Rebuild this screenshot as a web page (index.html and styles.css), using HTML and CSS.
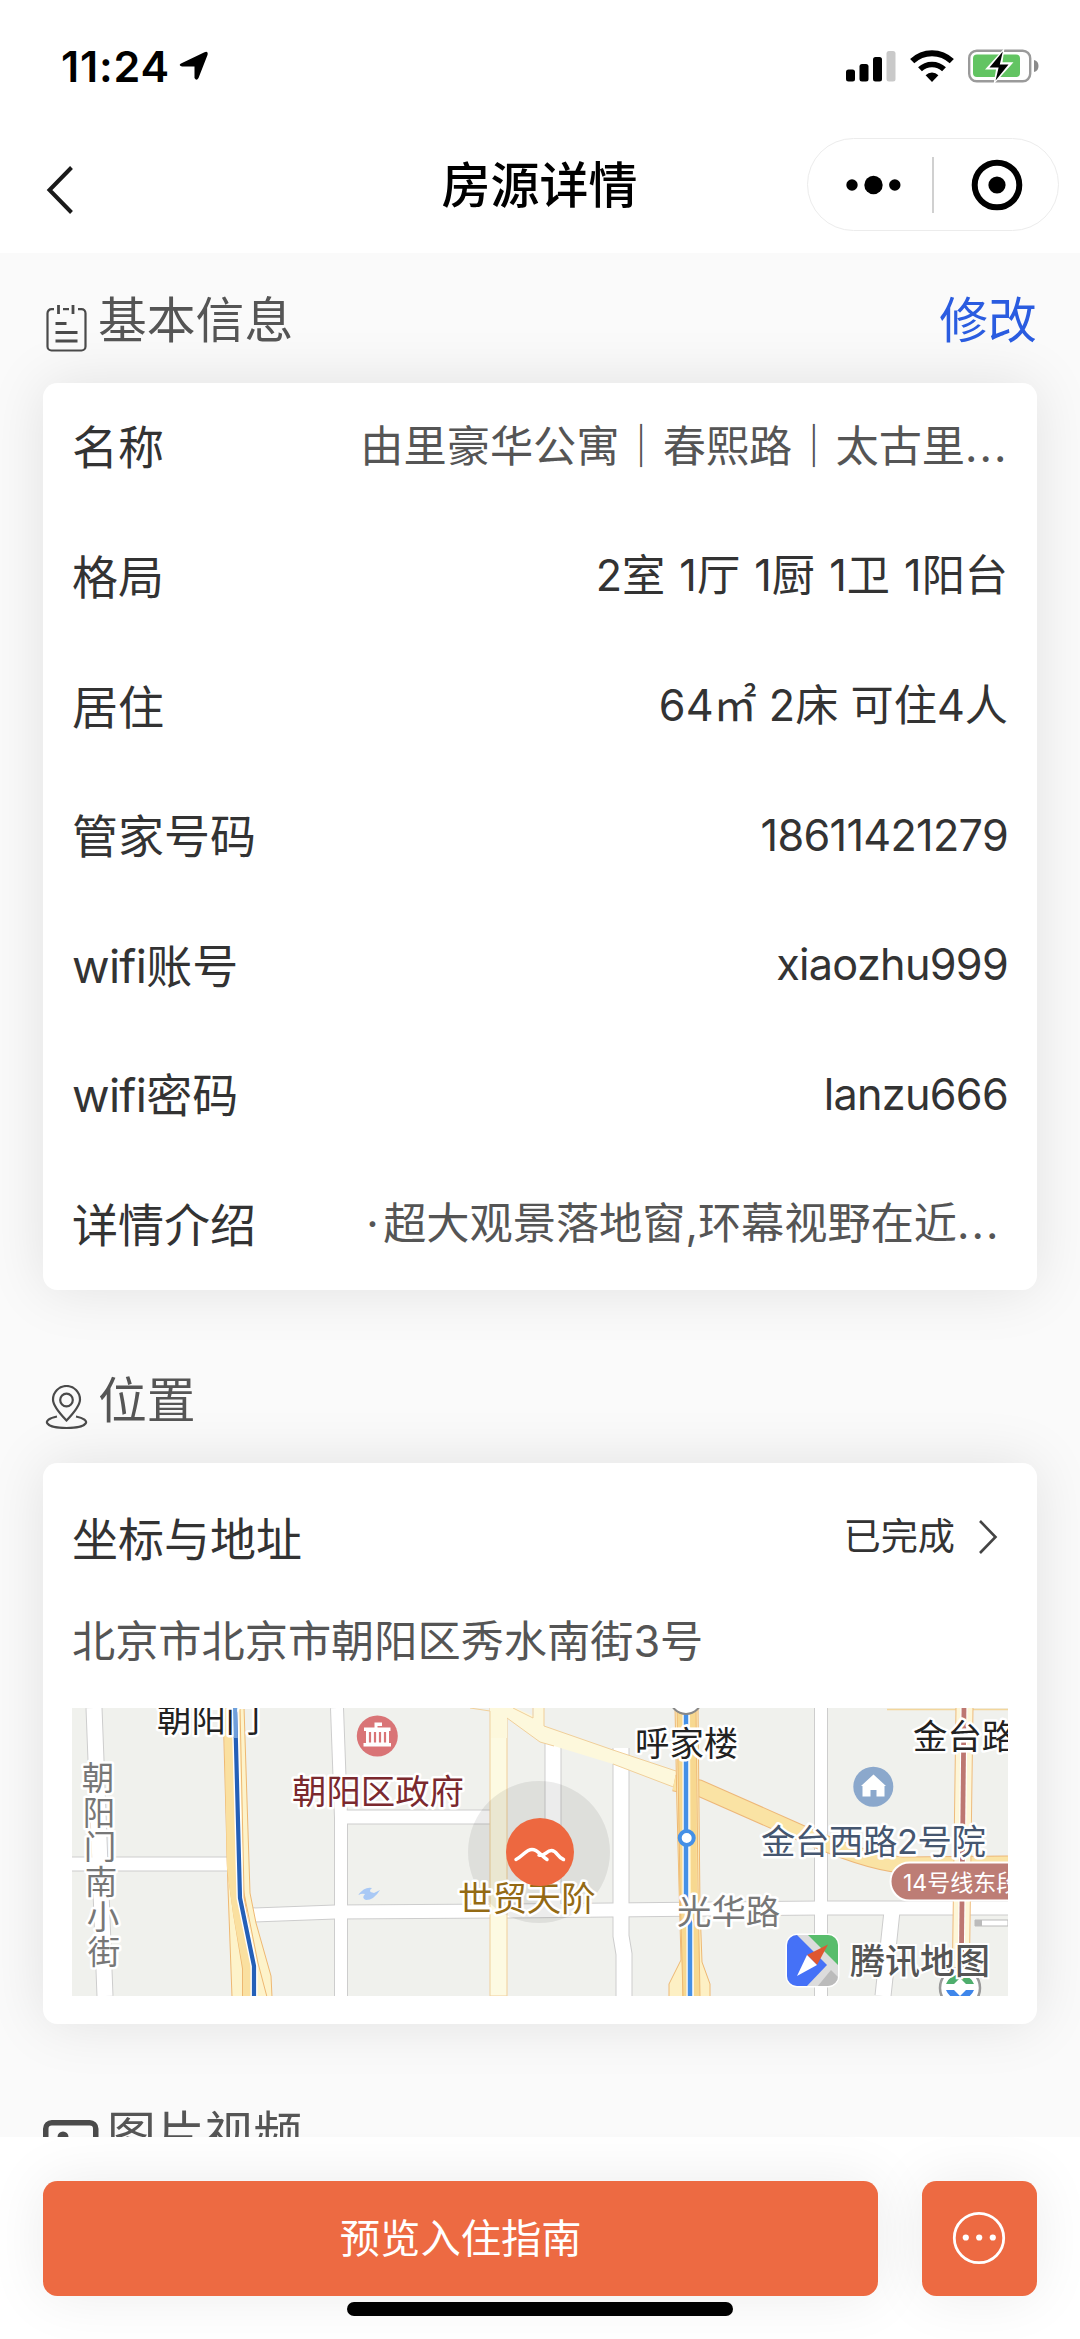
FILE: index.html
```html
<!DOCTYPE html>
<html lang="zh-CN">
<head>
<meta charset="utf-8">
<title>房源详情</title>
<link rel="stylesheet" href="styles.css">
</head>
<body>
<div class="app">
  <header class="top">
    <div class="status">
      <div class="clock">
        <span class="time">11:24</span>
        <svg class="loc" width="30" height="30" viewBox="0 0 30 30"><path d="M2 12.500 25.500 1.200q4-1.500 3 2.800L19.500 27q-2 3.500-4 0V15.600H3Q-1 14.300 2 12.500Z"/></svg>
      </div>
      <div class="indicators">
        <svg width="50" height="32" viewBox="0 0 50 32"><rect x="0" y="19.500" width="9" height="12" rx="2.500"/><rect x="13.500" y="14" width="9" height="17.500" rx="2.500"/><rect x="27" y="7" width="9" height="24.500" rx="2.500"/><rect x="40.500" y="1" width="9" height="30.500" rx="2.500" fill="#c9c9c9"/></svg>
        <svg width="44" height="32" viewBox="0 0 44 32"><path d="M2.200 11.200a28.500 28.500 0 0 1 39.600 0" fill="none" stroke="#000" stroke-width="6"/><path d="M10 19.300a17.300 17.300 0 0 1 24 0" fill="none" stroke="#000" stroke-width="5.500"/><path d="M22 32 15.600 25.200a9.200 9.200 0 0 1 12.800 0Z"/></svg>
        <svg width="72" height="34" viewBox="0 0 72 34"><rect x="1.200" y="1.700" width="61" height="30.600" rx="7.500" fill="#fff" stroke="#9a9a9a" stroke-width="2.400"/><rect x="5" y="5.500" width="47" height="22.500" rx="4" fill="#62c462"/><path d="M66 11q4.500 1.200 4.500 6T66 23Z" fill="#8a8a8a"/><path d="M36.500-1 17 20.500h11L25.500 35.500 45.500 13.200H34.500Z" fill="#fff"/><path d="M34.800 2.500 21.500 18.600h9.100L27.600 31.500 40.500 15.500H31.800Z"/></svg>
      </div>
    </div>
    <nav class="nav">
      <svg class="back" width="28" height="50" viewBox="0 0 28 50"><path d="M25.500 2.500 3.500 25 25.500 47.500" fill="none" stroke="#1a1a1a" stroke-width="4"/></svg>
      <h1>房源详情</h1>
      <div class="capsule">
        <svg width="56" height="20" viewBox="0 0 56 20"><circle cx="6" cy="10" r="5.700"/><circle cx="27.500" cy="10" r="9.200"/><circle cx="48.800" cy="10" r="5.700"/></svg>
        <i></i>
        <svg width="52" height="52" viewBox="0 0 52 52"><circle cx="26" cy="26" r="22.300" fill="none" stroke="#000" stroke-width="6"/><circle cx="26" cy="26" r="8.600"/></svg>
      </div>
    </nav>
  </header>

  <main>
    <div class="head">
      <svg class="note" width="41" height="48" viewBox="0 0 41 48" fill="none" stroke="#4a4a4a" stroke-width="2.200"><path d="M8 5.200H5.500A4 4 0 0 0 1.500 9.200V42.500A4 4 0 0 0 5.500 46.500H35.500A4 4 0 0 0 39.500 42.500V9.200A4 4 0 0 0 35.500 5.200H32M17 5.200h6"/><path d="M12.500 1v9M27 1v9M9.500 19.500h11M9.500 28.500h22M9.500 37h22" stroke-width="2.800"/></svg>
      <h2>基本信息</h2>
      <a class="edit">修改</a>
    </div>
    <section class="card">
      <div class="row"><b>名称</b><span class="soft">由里豪华公寓<strong>｜</strong>春熙路<strong>｜</strong>太古里<em>...</em></span></div>
      <div class="row"><b>格局</b><span class="rooms">2室 1厅 1厨 1卫 1阳台</span></div>
      <div class="row"><b>居住</b><span>64㎡ 2床 可住4人</span></div>
      <div class="row"><b>管家号码</b><span class="latin">18611421279</span></div>
      <div class="row"><b><u>wifi</u>账号</b><span class="latin">xiaozhu999</span></div>
      <div class="row"><b><u>wifi</u>密码</b><span class="latin">lanzu666</span></div>
      <div class="row"><b>详情介绍</b><span class="soft intro"><i>·</i>超大观景落地窗,环幕视野在近<em>...</em></span></div>
    </section>

    <div class="head">
      <svg class="pin" width="43" height="44" viewBox="0 0 43 44" fill="none" stroke="#4a4a4a" stroke-width="2.200"><path d="M21.500 35.500Q8 21.500 8 14.500a13.500 13.500 0 0 1 27 0Q35 21.500 21.500 35.500Z"/><circle cx="21.500" cy="15" r="6.300"/><path d="M12 31.500C-4 34.500-1 43 21.500 43s25.500-8.500 9.500-11.500"/></svg>
      <h2>位置</h2>
    </div>
    <section class="card place">
      <div class="place-top"><b>坐标与地址</b><span>已完成</span><svg width="22" height="36" viewBox="0 0 22 36"><path d="M3 2 18.500 18 3 34" fill="none" stroke="#444" stroke-width="2.600"/></svg></div>
      <p class="addr">北京市北京市朝阳区秀水南街3号</p>
      <svg class="map" width="936" height="288" viewBox="0 0 936 288">
        <rect width="936" height="288" fill="#f0f1ed"/>
        <!-- side streets: grey casing, then white surface -->
        <g id="streets" fill="none">
          <g stroke="#cdcdcd">
            <path stroke-width="17" d="M22 0 33 288M481 34V202M549 40V228L552 246V288M820 203 811 288"/>
            <path stroke-width="14" d="M265 0 269 110V288M749 0V288"/>
            <path stroke-width="15" d="M0 156H160M269 109H420M180 207 263 204 430 203 750 200H936"/>
          </g>
          <g stroke="#fff">
            <path stroke-width="15" d="M22 0 33 288M481 34V202M549 40V228L552 246V288M820 203 811 288"/>
            <path stroke-width="12" d="M265 0 269 110V288M749 0V288"/>
            <path stroke-width="13" d="M0 156H160M269 109H420M180 207 263 204 430 203 750 200H936"/>
          </g>
        </g>
        <path d="M903 212h33v6h-33z" fill="#fff" stroke="#bbb"/><path d="M903 212h7v6h-7z" fill="#bbb"/>
        <!-- main roads -->
        <path d="M418-1H435V288H418Z" fill="#fdfae2" stroke="#f0cf9a"/>
        <path d="M398-1 418 3V-1H441L462 8V-1H472V18L541 42 604 63V80L541 56 482 38 468 34 435 10V30H419V3Z" fill="#fdf8dc"/>
        <path d="M398 0 418 3M435 10 468 34 482 38M541 56 604 80M441 0 461 10V0M472 0V18L541 42 604 63" fill="none" stroke="#f0cf9a"/>
        <path d="M602 75 627 80 720 121Q792 154 830 157L936 156" fill="none" stroke="#edb779" stroke-width="17"/>
        <path d="M602 75 627 80 720 121Q792 154 830 157L936 156" fill="none" stroke="#fae3a4" stroke-width="15"/>
        <path d="M151-1H172L178 185 184 215 199 268 200 289H160L156 180Z" fill="#fdf3ca" stroke="#eeb872"/>
        <path d="M159-1 162 160 168 205 177 260V289" fill="none" stroke="#eeb872" stroke-width="14"/>
        <path d="M158-1 161 160 167 205 177 260V289" fill="none" stroke="#fae0a0" stroke-width="12"/>
        <path d="M168-1 172 185 186 255 195 289" fill="none" stroke="#eeb872"/>
        <path d="M603-1H626L628 200 630 254 638 276V289H597V276L609 252 605 100Z" fill="#fdf0c4" stroke="#eeb872"/>
        <path d="M608-1 610 180 613 260V289M621-1 622 180 625 260V289" fill="none" stroke="#f7d890" stroke-width="6"/>
        <path d="M605-1 608 180 611 289M624-1 626 180 628 289" fill="none" stroke="#eeb872"/>
        <path d="M815 1.500H936" stroke="#f3d69c" stroke-width="1.500"/>
        <path d="M884-1H901L897 289H880Z" fill="#fdf6d8" stroke="#eebb7c"/>
        <!-- metro lines -->
        <path d="M163-1 168 190 182 258V289" fill="none" stroke="#fff" stroke-width="7"/>
        <path d="M163-1 168 190 182 258V289" fill="none" stroke="#2460b8" stroke-width="4.200"/>
        <path d="M614 0V190L618 215V289" fill="none" stroke="#fff" stroke-width="7"/>
        <path d="M614 0V190L618 215V289" fill="none" stroke="#4590e6" stroke-width="4.500"/>
        <path d="M892-1 889 289" stroke="#fff" stroke-width="7"/><path d="M892-1 889 289" stroke="#bd7771" stroke-width="4.800"/>
        <circle cx="614.700" cy="130" r="7" fill="#fff" stroke="#4590e6" stroke-width="4"/>
        <circle cx="614" cy="-10" r="16" fill="#fff" stroke="#888" stroke-width="2"/>
        <circle cx="888" cy="280" r="20" fill="#fff" stroke="#999" stroke-width="2.500"/>
        <path d="M874 276a15 15 0 0 1 28 0h-8l-6-6-6 6Z" fill="#4fae6d"/><path d="M874 282h8l6 6 6-6h8a15 15 0 0 1-28 0Z" fill="#3f86ea"/>
        <!-- places -->
        <path d="M286 187q7-9 14-7-5 4 2 5l6-3q-6 10-14 10-5-2-1-6-3-1-7 1Z" fill="#a9c9f5"/>
        <circle cx="305.300" cy="28" r="20.500" fill="#d97476"/>
        <path d="M292 23V19.500H302.500V14.500H310V18H305.500V19.500H318.500V23H317V35H319V38.500H291.500V35H294V23Z" fill="#fff"/><path d="M298 24V34.500M303 24V34.500M308 24V34.500M313 24V34.500" stroke="#d97476" stroke-width="2.200"/>
        <circle cx="801.300" cy="78.700" r="20" fill="#8ba8cc"/>
        <path d="M789 78 801.500 66.500 814 78H812.500V88.500H804.500V82H798.500V88.500H790.500V78Z" fill="#fff"/>
        <circle cx="467" cy="144" r="71" fill="#000" fill-opacity=".075"/>
        <g class="names">
          <text x="85" y="24" fill="#222">朝阳门</text>
          <text x="220" y="96" fill="#7b292e">朝阳区政府</text>
          <text x="386" y="203" fill="#946a14">世贸天阶</text>
          <text x="563" y="48" fill="#222">呼家楼</text>
          <text x="841" y="41" fill="#222">金台路</text>
          <text x="689" y="146" fill="#45566f" textLength="225">金台西路2号院</text>
          <text x="605" y="216" fill="#777">光华路</text>
        </g>
        <path d="M163-1 163.800 30" stroke="#6f9fdb" stroke-width="4"/>
        <g class="names street" fill="#777"><text x="26" y="82">朝</text><text x="27" y="117">阳</text><text x="28" y="151">门</text><text x="29" y="186">南</text><text x="31" y="221">小</text><text x="32" y="256">街</text></g>
        <rect x="818.500" y="154.500" width="150" height="38" rx="19" fill="#bd7d75" stroke="#fff" stroke-width="2"/>
        <text class="line" x="831" y="183">14号线东段</text>
        <circle cx="468" cy="144" r="34" fill="#ed6840"/>
        <path d="M444 151.500C451 148 454 141.500 460 141.500S468 147 475 151.500M467 147C473 149 474 142.500 479.500 142.500S485 149 491.500 151.500" fill="none" stroke="#fff" stroke-width="3.500" stroke-linecap="round"/>
        <!-- map provider mark -->
        <g transform="translate(715 227)"><rect x="-1.500" y="-1.500" width="54" height="54" rx="12" fill="#fff"/><clipPath id="mark"><rect width="51" height="51" rx="10"/></clipPath><g clip-path="url(#mark)"><rect width="51" height="51" fill="#dcdcdc"/><path d="M-1-1H9L40 30 19 52H-1Z" fill="#4571f7"/><path d="M20-1H52V31Z" fill="#58bd6c"/><path d="M30 52 44 35 52 43V52Z" fill="#bbb"/></g><path d="M41 9.500 20 20 30 30Z" fill="#df5730"/><path d="M20 20 10 41 30 30Z" fill="#fff"/></g>
        <text class="brand" x="778" y="266">腾讯地图</text>
      </svg>
    </section>

    <div class="head">
      <svg class="pic" width="56" height="48" viewBox="0 0 56 48" fill="none" stroke="#4a4a4a" stroke-width="5.500"><rect x="2.750" y="2.750" width="50" height="42" rx="6"/><circle cx="20" cy="17" r="5.500" fill="#4a4a4a" stroke="none"/><path d="M8 39 22 28 30 34 42 22 50 30" stroke-width="4"/></svg>
      <h2>图片视频</h2>
    </div>
  </main>

  <footer class="bar">
    <div class="guide">预览入住指南</div>
    <div class="more"><svg width="54" height="54" viewBox="0 0 54 54" fill="#fff"><circle cx="27" cy="27" r="24.700" fill="none" stroke="#fff" stroke-width="2.800"/><circle cx="13.800" cy="26.500" r="3.100"/><circle cx="27.200" cy="26.500" r="3.100"/><circle cx="40.800" cy="26.500" r="3.100"/></svg></div>
    <div class="home"></div>
  </footer>
</div>
</body>
</html>
```
FILE: styles.css
```css
* { box-sizing: border-box; }
body {
  margin: 0;
  font-family: Inter, "Noto Sans CJK SC", sans-serif;
  color: #333;
  background: #fafafa;
}
h1, h2, p { margin: 0; font-weight: 400; }
b { font-weight: 400; }
strong { font-weight: 500; }
em, i { font-style: normal; }
u { text-decoration: none; }
svg { display: block; flex: none; }

.app {
  height: 2339px;
  overflow: hidden;
  display: flex;
  flex-direction: column;
}

/* status bar and navigation */
.top { height: 253px; flex: none; background: #fff; }
.status {
  height: 132px;
  padding: 0 40px 0 61px;
  display: flex;
  justify-content: space-between;
  align-items: center;
}
.clock, .indicators { display: flex; align-items: center; }
.time { font-size: 43px; font-weight: 600; color: #000; letter-spacing: 0.8px; }
.loc { margin-left: 9px; }
.indicators { gap: 14px; }
.nav {
  height: 106px;
  padding: 0 21px 0 46px;
  display: grid;
  grid-template-columns: 1fr auto 1fr;
  align-items: center;
}
.back { margin-top: 10px; }
.nav h1 { margin: 2px 26px 0 0; font-size: 49px; font-weight: 500; line-height: 70px; color: #000; }
.capsule {
  justify-self: end;
  width: 252px;
  height: 93px;
  margin-top: -2px;
  border: 1.5px solid #ececec;
  border-radius: 47px;
  display: flex;
  align-items: center;
  padding: 1px 35px 0 38px;
  justify-content: space-between;
}
.capsule i { width: 1.5px; height: 56px; background: #d0d0d0; margin-right: 7px; }

/* content */
main { flex: 1; min-height: 0; overflow: hidden; }
.head {
  height: 129.6px;
  padding: 0 43.2px 0 46px;
  display: flex;
  align-items: center;
}
.head h2 { margin: 6px 0 0 11px; font-size: 48.8px; line-height: 70px; color: #555; }
.note { margin-top: 20px; }
.pin { margin: 19px -1px 0 -1px; }
.pic { margin: 24px 0 0 -3px; }
.head .pic + h2 { margin-left: 8px; }
.edit { margin: 6px 0 0 auto; font-size: 48.8px; line-height: 70px; color: #2a5ce0; }
.card {
  margin: 0 43.2px 43.2px;
  padding: 0 28.8px;
  background: #fff;
  border-radius: 14.4px;
  box-shadow: 0 0 58px rgba(0, 0, 0, 0.1);
}
.row {
  height: 129.6px;
  display: flex;
  align-items: center;
  justify-content: space-between;
  font-size: 43.2px;
  line-height: 62px;
  white-space: nowrap;
}
.row b, .place-top b { font-size: 46px; }
.row u { letter-spacing: -0.7px; }
.row span { margin-top: -3px; }
.row .latin { letter-spacing: -0.7px; }
.rooms { word-spacing: 2px; }
.soft { color: #555; }
.soft em { display: inline-block; width: 43px; letter-spacing: 2px; }
.intro { padding-right: 8px; }
.intro i { display: inline-block; width: 17px; }

.place { height: 561.6px; }
.place-top {
  height: 153px;
  display: flex;
  align-items: center;
  line-height: 62px;
}
.place-top span { margin: -4px 22px 0 auto; font-size: 37.2px; }
.place-top svg { margin: -4px 9px 0 0; }
.addr { height: 92px; font-size: 43.2px; line-height: 50px; color: #555; }
.names {
  font-size: 34.4px;
  paint-order: stroke;
  stroke: #fff;
  stroke-width: 5px;
  stroke-linejoin: round;
}
.names.street { font-size: 32.5px; text-anchor: middle; }
.line { font-size: 23px; fill: #fff; }
.brand { font-size: 35px; font-weight: 500; fill: #555; paint-order: stroke; stroke: #fff; stroke-width: 4px; }

/* bottom actions */
.bar {
  flex: none;
  position: relative;
  height: 201.6px;
  padding: 43.2px;
  display: flex;
  justify-content: space-between;
  background: #fff;
}
.guide, .more {
  height: 115.2px;
  border-radius: 14.4px;
  background: #ed6a42;
  box-shadow: 0 0 58px rgba(0, 0, 0, 0.08);
  display: flex;
  align-items: center;
  justify-content: center;
}
.guide { width: 835px; padding-bottom: 5px; font-size: 40.3px; color: #fff; }
.more { width: 115.2px; }
.home {
  position: absolute;
  left: 347px;
  top: 164.5px;
  width: 386px;
  height: 14.5px;
  border-radius: 8px;
  background: #000;
}
```
